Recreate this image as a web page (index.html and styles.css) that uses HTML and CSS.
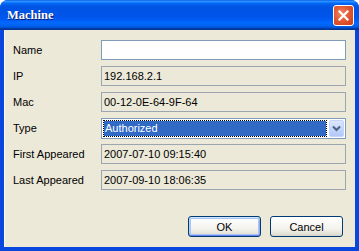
FILE: index.html
```html
<!DOCTYPE html>
<html>
<head>
<meta charset="utf-8">
<link rel="stylesheet" href="styles.css">
</head>
<body>
<div class="window">
  <div class="titlebar">
    <span class="title">Machine</span>
    <div class="close">
      <svg width="11" height="11" viewBox="0 0 11 11"><path d="M1.5 1.5 L9.5 9.5 M9.5 1.5 L1.5 9.5" stroke="#fff" stroke-width="2.2" stroke-linecap="square" fill="none"/></svg>
    </div>
  </div>
  <div class="client">
    <div class="form">
      <div class="label">Name</div>
      <div class="field edit"></div>
      <div class="label">IP</div>
      <div class="field">192.168.2.1</div>
      <div class="label">Mac</div>
      <div class="field">00-12-0E-64-9F-64</div>
      <div class="label">Type</div>
      <div class="combo">
        <span class="sel">Authorized</span>
        <span class="drop"><svg width="9" height="7" viewBox="0 0 9 7"><path d="M1 1.5 L4.5 5 L8 1.5" stroke="#4d6185" stroke-width="2" fill="none"/></svg></span>
      </div>
      <div class="label">First Appeared</div>
      <div class="field">2007-07-10 09:15:40</div>
      <div class="label">Last Appeared</div>
      <div class="field">2007-09-10 18:06:35</div>
    </div>
    <div class="buttons">
      <div class="btn default">OK</div>
      <div class="btn">Cancel</div>
    </div>
  </div>
</div>
</body>
</html>
```
FILE: styles.css
```css
html, body {
  margin: 0;
  padding: 0;
  background: #fff;
}
.window {
  width: 359px;
  height: 251px;
  display: flex;
  flex-direction: column;
  background: #0846dd;
  border-radius: 8px 8px 0 0;
  overflow: hidden;
  font-family: "Liberation Sans", Arial, sans-serif;
  font-size: 11px;
  color: #000;
}
.titlebar {
  height: 30px;
  flex: none;
  display: flex;
  align-items: center;
  justify-content: space-between;
  padding: 0 5px 0 7px;
  background: linear-gradient(to bottom, #0058ee 0%, #3593ff 4%, #288eff 6%, #127dff 8%, #036ffc 10%, #0262ee 14%, #0057e5 20%, #0054e3 24%, #0055eb 56%, #005bf5 66%, #026afe 76%, #0062ef 86%, #0052d6 92%, #0040ab 94%, #003092 100%);
}
.title {
  font-family: "Liberation Serif", "Times New Roman", serif;
  font-weight: bold;
  font-size: 12.5px;
  color: #fff;
  text-shadow: 1px 1px 0 #0a1c7a;
  margin-top: 1px;
}
.close {
  width: 19px;
  height: 19px;
  border: 1px solid #fff;
  border-radius: 3px;
  background: radial-gradient(circle at 40% 40%, #f08a64 0%, #e25b34 45%, #c63a18 100%);
  display: flex;
  align-items: center;
  justify-content: center;
  margin-top: 1px;
}
.client {
  flex: 1;
  margin: 0 4px 4px 4px;
  background: #ece9d8;
  padding: 10px 9px 0 9px;
  box-shadow: inset 1px 0 0 #f8f7f2;
}
.form {
  display: grid;
  grid-template-columns: 88px 1fr;
  grid-auto-rows: 20px;
  row-gap: 6px;
  align-items: center;
}
.label {
  line-height: 20px;
}
.field {
  box-sizing: border-box;
  height: 20px;
  border: 1px solid #9ca6b0;
  background: #ece9d8;
  padding: 0 2px;
  line-height: 18px;
  white-space: nowrap;
}
.field.edit {
  background: #fff;
  border-color: #7f9db9;
}
.combo {
  box-sizing: border-box;
  height: 21px;
  align-self: start;
  border: 1px solid #7f9db9;
  background: #fff;
  display: flex;
  align-items: center;
  padding: 1px 1px 1px 2px;
  gap: 3px;
}
.sel {
  flex: 1;
  height: 15px;
  line-height: 15px;
  background: #316ac5;
  color: #fff;
  outline: 1px dotted #000;
  padding-left: 1px;
}
.drop {
  width: 15px;
  height: 17px;
  box-sizing: border-box;
  border: 1px solid #c3d3fd;
  border-radius: 2px;
  background: linear-gradient(to bottom, #dce7fd, #c1d3fb 60%, #b2c8f7);
  display: flex;
  align-items: center;
  justify-content: center;
}
.buttons {
  display: flex;
  justify-content: flex-end;
  gap: 9px;
  margin-top: 26px;
  padding-right: 3px;
}
.btn {
  box-sizing: border-box;
  width: 73px;
  height: 21px;
  border: 1px solid #003c74;
  border-radius: 3px;
  background: linear-gradient(to bottom, #ffffff 0%, #f4f3ee 60%, #e3e0d6 90%, #d6d0c5 100%);
  display: flex;
  align-items: center;
  justify-content: center;
}
.btn.default {
  box-shadow: inset 0 1px 0 #cee7ff, inset 0 -1px 0 #6982ee, inset 1px 0 0 #b8d2f9, inset -1px 0 0 #8fb0f5, inset 0 0 0 2px #a9c4f5;
}
```
